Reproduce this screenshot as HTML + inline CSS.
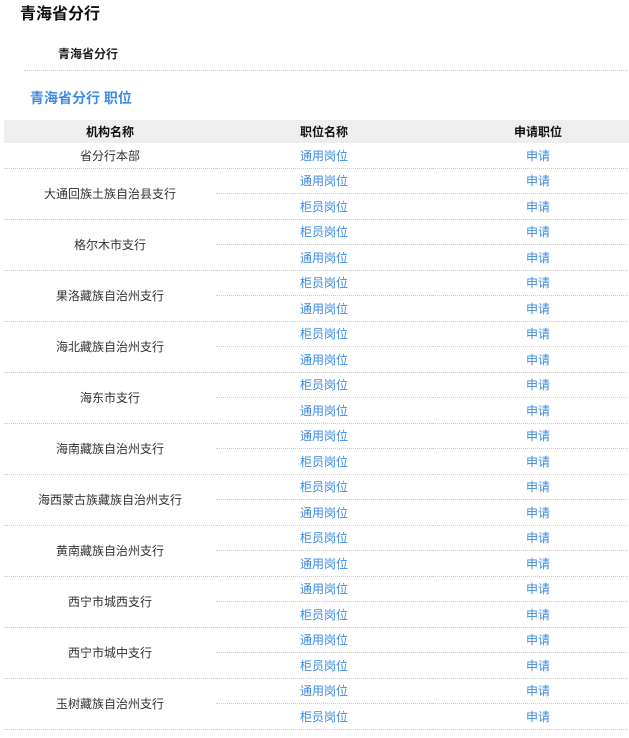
<!DOCTYPE html>
<html><head><meta charset="utf-8"><style>
html,body{margin:0;padding:0;width:629px;height:738px;overflow:hidden;background:#fff;font-family:"Liberation Sans","Noto Sans CJK SC",sans-serif;color:#333;}
.t1{position:absolute;left:20px;top:5px;font-size:16px;font-weight:bold;color:#111;line-height:20px;}
.t2{position:absolute;left:58px;top:45px;font-size:12px;font-weight:bold;color:#222;line-height:18px;}
.line{position:absolute;left:24px;top:70px;width:610px;border-top:1px dotted #ccc;}
.t3{position:absolute;left:30px;top:88px;font-size:14px;font-weight:bold;color:#3d8be2;line-height:20px;}
table{position:absolute;left:4px;top:120px;width:640px;border-collapse:collapse;font-size:12px;table-layout:fixed;}
th{background:#eee;height:23px;padding:0;font-weight:bold;color:#111;text-align:center;}
td{height:24.5px;padding:0;text-align:center;border-bottom:1px dotted #ccc;}
td.b{color:#3d8be2;}
</style></head><body>
<div class="t1">青海省分行</div>
<div class="t2">青海省分行</div>
<div class="line"></div>
<div class="t3">青海省分行 职位</div>
<table>
<colgroup><col style="width:212px"><col style="width:216px"><col style="width:212px"></colgroup>
<tr><th>机构名称</th><th>职位名称</th><th>申请职位</th></tr>
<tr><td>省分行本部</td><td class="b">通用岗位</td><td class="b">申请</td></tr>
<tr><td rowspan="2">大通回族土族自治县支行</td><td class="b">通用岗位</td><td class="b">申请</td></tr>
<tr><td class="b">柜员岗位</td><td class="b">申请</td></tr>
<tr><td rowspan="2">格尔木市支行</td><td class="b">柜员岗位</td><td class="b">申请</td></tr>
<tr><td class="b">通用岗位</td><td class="b">申请</td></tr>
<tr><td rowspan="2">果洛藏族自治州支行</td><td class="b">柜员岗位</td><td class="b">申请</td></tr>
<tr><td class="b">通用岗位</td><td class="b">申请</td></tr>
<tr><td rowspan="2">海北藏族自治州支行</td><td class="b">柜员岗位</td><td class="b">申请</td></tr>
<tr><td class="b">通用岗位</td><td class="b">申请</td></tr>
<tr><td rowspan="2">海东市支行</td><td class="b">柜员岗位</td><td class="b">申请</td></tr>
<tr><td class="b">通用岗位</td><td class="b">申请</td></tr>
<tr><td rowspan="2">海南藏族自治州支行</td><td class="b">通用岗位</td><td class="b">申请</td></tr>
<tr><td class="b">柜员岗位</td><td class="b">申请</td></tr>
<tr><td rowspan="2">海西蒙古族藏族自治州支行</td><td class="b">柜员岗位</td><td class="b">申请</td></tr>
<tr><td class="b">通用岗位</td><td class="b">申请</td></tr>
<tr><td rowspan="2">黄南藏族自治州支行</td><td class="b">柜员岗位</td><td class="b">申请</td></tr>
<tr><td class="b">通用岗位</td><td class="b">申请</td></tr>
<tr><td rowspan="2">西宁市城西支行</td><td class="b">通用岗位</td><td class="b">申请</td></tr>
<tr><td class="b">柜员岗位</td><td class="b">申请</td></tr>
<tr><td rowspan="2">西宁市城中支行</td><td class="b">通用岗位</td><td class="b">申请</td></tr>
<tr><td class="b">柜员岗位</td><td class="b">申请</td></tr>
<tr><td rowspan="2">玉树藏族自治州支行</td><td class="b">通用岗位</td><td class="b">申请</td></tr>
<tr><td class="b">柜员岗位</td><td class="b">申请</td></tr>
</table>
</body></html>
